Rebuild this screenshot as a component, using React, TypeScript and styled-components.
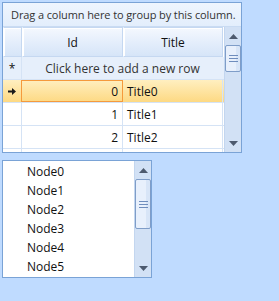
import React from 'react';
import styled, { createGlobalStyle } from 'styled-components';

const GlobalStyle = createGlobalStyle`
  html, body {
    margin: 0;
    padding: 0;
    background: #bfdbff;
  }
  body {
    font-family: "Open Sans", "Noto Sans", sans-serif;
    font-size: 11px;
  }
`;

const Page = styled.div`
  display: flex;
  flex-direction: column;
  align-items: flex-start;
  gap: 7px;
  padding: 2px;
  width: 279px;
  height: 301px;
  box-sizing: border-box;
`;

const Grid = styled.div`
  width: 240px;
  height: 151px;
  box-sizing: border-box;
  border: 1px solid #7aa3d6;
  display: flex;
  flex-direction: column;
  overflow: hidden;
  background: #ffffff;
`;

const GroupPanel = styled.div`
  height: 24px;
  flex: none;
  display: flex;
  align-items: center;
  padding-left: 8px;
  letter-spacing: -0.1px;
  background: linear-gradient(#eef5fe, #e3eefc);
  border-bottom: 1px solid #c9dbf2;
  color: #333;
  box-sizing: border-box;
`;

const GridBody = styled.div`
  flex: 1;
  display: flex;
  min-height: 0;
`;

const Table = styled.div`
  flex: 1;
  display: flex;
  flex-direction: column;
  overflow: hidden;
`;

const HeaderRow = styled.div`
  height: 30px;
  flex: none;
  display: grid;
  grid-template-columns: 19px 101px 100px;
`;

const HeaderCell = styled.div`
  display: flex;
  align-items: center;
  justify-content: center;
  box-sizing: border-box;
  border: 1px solid #c5d8f1;
  border-left-color: #ffffff;
  box-shadow: inset 1px 1px 0 #ffffff;
  background: linear-gradient(#f4f8fe, #e3edfb 55%, #d6e5f8);
  color: #111;
  font-size: 12px;
`;

const Row = styled.div<{ $bg?: string }>`
  height: 23px;
  flex: none;
  display: grid;
  grid-template-columns: 19px 101px 100px;
  background: ${(p) => p.$bg || '#ffffff'};
  border-bottom: 1px solid #d5e3f5;
  box-sizing: border-box;
`;

const Filler = styled.div`
  flex: 1;
  display: grid;
  grid-template-columns: 19px 101px 100px;
  & > div {
    border-right: 1px solid #d5e3f5;
  }
`;

const Indicator = styled.div<{ $bg?: string }>`
  display: flex;
  align-items: center;
  justify-content: center;
  border-right: 1px solid #d5e3f5;
  background: ${(p) => p.$bg || '#ffffff'};
  color: #111;
  font-size: 12px;
`;

const NewRowText = styled.div`
  grid-column: 2 / 4;
  display: flex;
  align-items: center;
  justify-content: center;
  color: #333;
  font-size: 12px;
`;

const Cell = styled.div<{ $right?: boolean; $current?: boolean }>`
  display: flex;
  align-items: center;
  justify-content: ${(p) => (p.$right ? 'flex-end' : 'flex-start')};
  padding: 0 4px;
  box-sizing: border-box;
  border-right: 1px solid #d5e3f5;
  color: #111;
  font-size: 12px;
  ${(p) => p.$current && 'border: 1px solid #f59a3c; margin-left: -1px;'}
`;

const ScrollBar = styled.div`
  width: 17px;
  flex: none;
  display: flex;
  flex-direction: column;
  align-items: center;
  background: #d2e1f5;
  border-left: 1px solid #c3d6ef;
  box-sizing: border-box;
`;

const ArrowBox = styled.div`
  height: 18px;
  flex: none;
  width: 100%;
  display: flex;
  align-items: center;
  justify-content: center;
`;

const Thumb = styled.div<{ $h: number }>`
  width: 16px;
  height: ${(p) => p.$h}px;
  flex: none;
  box-sizing: border-box;
  border: 1px solid #7f9dc8;
  border-radius: 2px;
  background: linear-gradient(90deg, #e8f0fc 0 70%, #d8e5f7 70% 100%);
  display: flex;
  align-items: center;
  justify-content: center;
`;

const Track = styled.div`
  flex: 1;
`;

const ListBox = styled.div`
  width: 150px;
  height: 118px;
  box-sizing: border-box;
  border: 1px solid #7aa3d6;
  background: #ffffff;
  display: flex;
  overflow: hidden;
`;

const Items = styled.div`
  flex: 1;
  padding-top: 1px;
  display: flex;
  flex-direction: column;
`;

const Item = styled.div`
  height: 19px;
  display: flex;
  align-items: center;
  padding-left: 24px;
  color: #111;
  font-size: 12px;
`;

const Up = () => (
  <svg width="9" height="5" viewBox="0 0 9 5">
    <path d="M0 5 L4.5 0 L9 5 Z" fill="#4d5a6e" />
  </svg>
);

const Down = () => (
  <svg width="9" height="5" viewBox="0 0 9 5">
    <path d="M0 0 L9 0 L4.5 5 Z" fill="#4d5a6e" />
  </svg>
);

const Grip = () => (
  <svg width="9" height="7" viewBox="0 0 9 7">
    <path d="M0 0.5 H9 M0 3.5 H9 M0 6.5 H9" stroke="#6f8dbd" strokeWidth="1" />
  </svg>
);

const CurrentArrow = () => (
  <svg width="9" height="9" viewBox="0 0 9 9">
    <path d="M0 3.5 H4 V1 L8 4.5 L4 8 V5.5 H0 Z" fill="#1a1a1a" />
  </svg>
);

const rows = [0, 1, 2];

export default function App() {
  return (
    <Page>
      <GlobalStyle />
      <Grid>
        <GroupPanel>Drag a column here to group by this column.</GroupPanel>
        <GridBody>
          <Table>
            <HeaderRow>
              <HeaderCell />
              <HeaderCell>Id</HeaderCell>
              <HeaderCell>Title</HeaderCell>
            </HeaderRow>
            <Row $bg="#e6effb">
              <Indicator $bg="#e6effb">*</Indicator>
              <NewRowText>Click here to add a new row</NewRowText>
            </Row>
            {rows.map((i) => (
              <Row key={i} $bg={i === 0 ? 'linear-gradient(#ffefc0, #fdd983)' : undefined}>
                <Indicator $bg="transparent">{i === 0 && <CurrentArrow />}</Indicator>
                <Cell $right $current={i === 0}>{i}</Cell>
                <Cell>Title{i}</Cell>
              </Row>
            ))}
            <Filler>
              <div />
              <div />
              <div />
            </Filler>
          </Table>
          <ScrollBar>
            <ArrowBox><Up /></ArrowBox>
            <Thumb $h={27}><Grip /></Thumb>
            <Track />
            <ArrowBox><Down /></ArrowBox>
          </ScrollBar>
        </GridBody>
      </Grid>
      <ListBox>
        <Items>
          {[0, 1, 2, 3, 4, 5].map((i) => (
            <Item key={i}>Node{i}</Item>
          ))}
        </Items>
        <ScrollBar>
          <ArrowBox><Up /></ArrowBox>
          <Thumb $h={50}><Grip /></Thumb>
          <Track />
          <ArrowBox><Down /></ArrowBox>
        </ScrollBar>
      </ListBox>
    </Page>
  );
}
